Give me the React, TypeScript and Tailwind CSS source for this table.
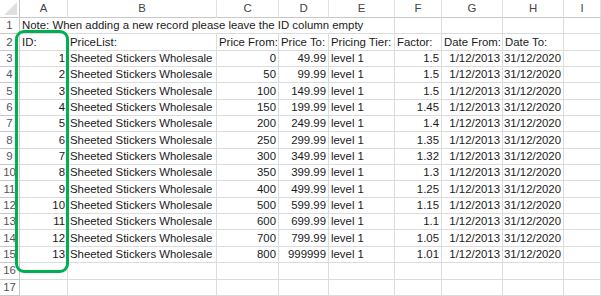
import React from "react";

const cols = ["A", "B", "C", "D", "E", "F", "G", "H", "I"];

type Cell = { t: string; r?: boolean };

const data: [number, string, string, string][] = [
  [1, "0", "49.99", "1.5"],
  [2, "50", "99.99", "1.5"],
  [3, "100", "149.99", "1.5"],
  [4, "150", "199.99", "1.45"],
  [5, "200", "249.99", "1.4"],
  [6, "250", "299.99", "1.35"],
  [7, "300", "349.99", "1.32"],
  [8, "350", "399.99", "1.3"],
  [9, "400", "499.99", "1.25"],
  [10, "500", "599.99", "1.15"],
  [11, "600", "699.99", "1.1"],
  [12, "700", "799.99", "1.05"],
  [13, "800", "999999", "1.01"],
];

const headerRow: Cell[] = [
  { t: "ID:" },
  { t: "PriceList:" },
  { t: "Price From:" },
  { t: "Price To:" },
  { t: "Pricing Tier:" },
  { t: "Factor:" },
  { t: "Date From:" },
  { t: "Date To:" },
  { t: "" },
];

const rows: Cell[][] = data.map((d) => [
  { t: String(d[0]), r: true },
  { t: "Sheeted Stickers Wholesale" },
  { t: d[1], r: true },
  { t: d[2], r: true },
  { t: "level 1" },
  { t: d[3], r: true },
  { t: "1/12/2013", r: true },
  { t: "31/12/2020", r: true },
  { t: "" },
]);

const emptyRow: Cell[] = cols.map(() => ({ t: "" }));

const cellCls =
  "border-r border-b border-[#dadcdd] flex items-center px-[2px] whitespace-nowrap overflow-visible text-[#1a1a1a]";

function RowHeader({ n }: { n: number }) {
  return (
    <div className="border-r border-b border-[#c8c8c8] flex items-center justify-center text-[#555] bg-white">
      {n}
    </div>
  );
}

export default function App() {
  const body: Cell[][] = [headerRow, ...rows, emptyRow, emptyRow];
  return (
    <div
      className="relative w-[601px] h-[296px] overflow-hidden bg-white text-[11.4px] leading-[13px]"
      style={{ fontFamily: '"Liberation Sans", Arial, sans-serif' }}
    >
      <div className="grid grid-cols-[20px_48px_149px_62px_50px_66px_47px_61px_61px_1fr] grid-rows-[18px_repeat(17,16.35px)]">
        <div className="relative border-r border-b border-[#c8c8c8] bg-white">
          <div className="absolute right-[2px] bottom-[2px] w-0 h-0 border-l-[13px] border-l-transparent border-b-[13px] border-b-[#dfdfdf]" />
        </div>
        {cols.map((c) => (
          <div
            key={c}
            className="border-r border-b border-[#c8c8c8] border-r-[#e1e1e1] flex items-center justify-center text-[#444] bg-white"
          >
            {c}
          </div>
        ))}
        <RowHeader n={1} />
        <div className={`${cellCls} col-span-5`}>
          Note: When adding a new record please leave the ID column empty
        </div>
        <div className={cellCls} />
        <div className={cellCls} />
        <div className={cellCls} />
        <div className={cellCls} />
        {body.map((row, i) => (
          <React.Fragment key={i}>
            <RowHeader n={i + 2} />
            {row.map((c, j) => (
              <div key={j} className={`${cellCls} ${c.r ? "justify-end" : "justify-start"}`}>
                {c.t}
              </div>
            ))}
          </React.Fragment>
        ))}
      </div>
      <div className="absolute left-[15px] top-[30px] w-[54px] h-[243px] border-[3px] border-[#00b050] rounded-[9px]" />
    </div>
  );
}
